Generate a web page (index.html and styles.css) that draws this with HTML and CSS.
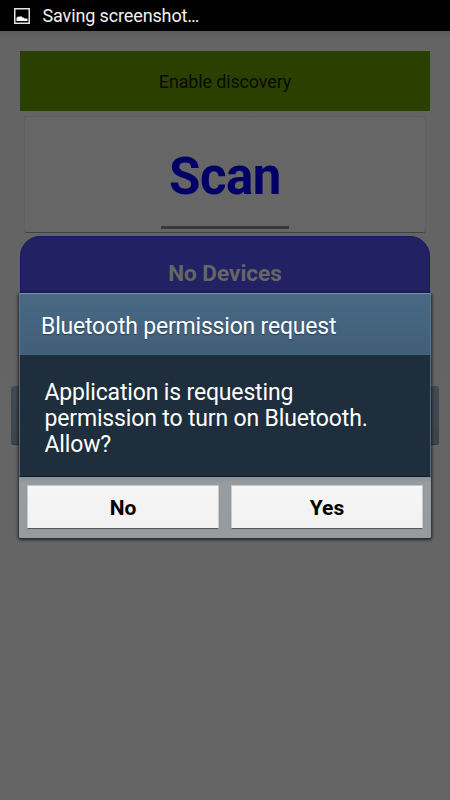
FILE: index.html
```html
<!DOCTYPE html>
<html lang="en">
<head>
<meta charset="utf-8">
<title>Bluetooth permission request</title>
<link rel="stylesheet" href="styles.css">
</head>
<body>
<header class="status">
  <svg class="status-icon" width="16" height="16" viewBox="0 0 16 16"><rect x=".75" y=".75" width="14.5" height="14.5" fill="none" stroke="#e4e4e4" stroke-width="1.5"/><path d="M2.5 13V9.8L4 8.5l2 .3 1-.8 1.500 1.500h1l1 1h2.500l.5.5V13z" fill="#fff"/></svg>
  <span class="status-text">Saving screenshot…</span>
</header>
<main class="app">
  <div class="discovery"><span>Enable discovery</span></div>
  <div class="scan"><span class="scan-label">Scan</span><i class="scan-line"></i></div>
  <div class="devices"><span>No Devices</span></div>
  <div class="back-button"></div>
</main>
<section class="dialog" role="dialog">
  <h1 class="title"><span>Bluetooth permission request</span></h1>
  <p class="message">Application is requesting<br>permission to turn on Bluetooth.<br>Allow?</p>
  <div class="actions"><button>No</button><button>Yes</button></div>
</section>
</body>
</html>
```
FILE: styles.css
```css
* { box-sizing: border-box; }
body {
  margin: 0;
  width: 450px;
  height: 800px;
  overflow: hidden;
  position: relative;
  background: #656565;
  font-family: Roboto, "Liberation Sans", sans-serif;
}
.status {
  height: 31px;
  background: #000;
  color: #f2f2f2;
  display: flex;
  align-items: center;
  padding-left: 14px;
  gap: 12.5px;
  font-size: 18px;
  letter-spacing: -.13px;
}
.status-icon { display: block; }
.status-text { white-space: nowrap; }
.app {
  height: 769px;
  padding: 20px 11px 0;
  background: linear-gradient(#5b5b5b, #646464 8px, #656565);
}
.discovery {
  height: 60px;
  margin: 0 9px;
  background: #2b4000;
  border: 1px solid #234306;
  color: #080b02;
  font-size: 18px;
  letter-spacing: -.15px;
  display: flex;
  align-items: center;
  justify-content: center;
}
.scan {
  height: 117px;
  margin: 5px 13px 0;
  border: 1px solid #5f5f5f;
  border-bottom: 1px solid #424242;
  border-radius: 3px;
  background: #666;
  display: flex;
  flex-direction: column;
  align-items: center;
  justify-content: space-between;
  color: #000067;
  font-size: 51px;
  font-weight: 700;
  letter-spacing: -.5px;
}
.scan-label { line-height: 61px; margin-top: 29px; }
.scan-line { width: 128px; height: 3px; background: #383838; margin-bottom: 3px; }
.devices {
  height: 130px;
  margin: 3px 9px 0;
  border: 1px solid #18186a;
  border-radius: 20px;
  background: #212164;
  color: #666;
  font-size: 22.5px;
  font-weight: 700;
  text-align: center;
  line-height: 26px;
  padding-top: 23px;
}
.back-button {
  height: 59px;
  margin-top: 20px;
  border-radius: 3px;
  background: linear-gradient(#414b55, #3d444b);
  border-bottom: 1px solid #303539;
}
.dialog {
  position: absolute;
  left: 19px;
  top: 293px;
  width: 412px;
  height: 245px;
  border-radius: 2px;
  background: #969b9f;
  box-shadow: 0 1px 3px 1px rgba(0, 0, 0, .65);
  overflow: hidden;
}
.title {
  margin: 0;
  height: 62px;
  padding: 5px 0 0 21px;
  display: flex;
  align-items: center;
  background: linear-gradient(#486884, #415f79);
  border: 1px solid #567590;
  border-top-color: #7895ab;
  border-bottom-color: #426580;
  color: #fff;
  font-size: 23px;
  font-weight: 400;
  letter-spacing: -.2px;
  text-shadow: 0 1px 1px #263f56;
}
.message {
  margin: 0;
  height: 122px;
  padding: 25px 0 0 24.5px;
  background: #1e2e3c;
  border-left: 1px solid #526b7f;
  border-right: 1px solid #526b7f;
  border-bottom: 1px solid #061f36;
  color: #fff;
  font-size: 23px;
  letter-spacing: -.16px;
  line-height: 26px;
  white-space: nowrap;
}
.actions {
  height: 61px;
  padding: 8px 8px 0;
  display: flex;
  gap: 12px;
  background: linear-gradient(#8b9094, #979ca0 6px, #979b9e);
}
.actions button {
  flex: 1;
  height: 44px;
  padding: 2px 0 0;
  border: 1px solid #c8cbcd;
  border-bottom-color: #55595c;
  border-radius: 1px;
  background: linear-gradient(#f6f6f6, #f1f1f1);
  box-shadow: 0 0 1px #777b7e;
  color: #000;
  font: 700 21px Roboto, "Liberation Sans", sans-serif;
}
```
